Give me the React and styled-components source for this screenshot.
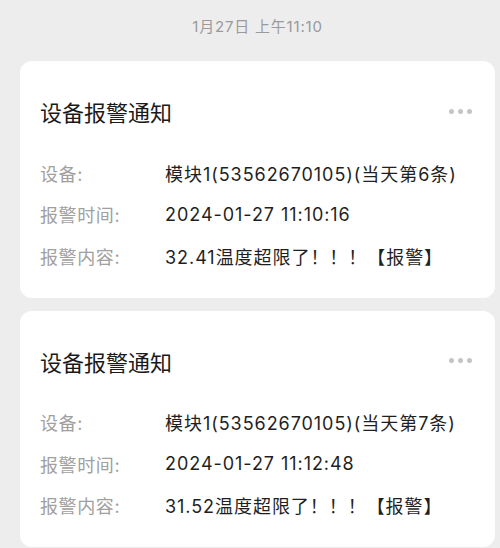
import React from "react";
import styled, { createGlobalStyle } from "styled-components";

const GlobalStyle = createGlobalStyle`
  html, body {
    margin: 0;
    padding: 0;
    background: #ededed;
    font-family: Inter, "Noto Sans CJK SC", "Noto Sans", sans-serif;
  }
`;

const alarmData = [
  {
    device: "模块1(53562670105)(当天第6条)",
    time: "2024-01-27 11:10:16",
    content: "32.41温度超限了！！！【报警】",
  },
  {
    device: "模块1(53562670105)(当天第7条)",
    time: "2024-01-27 11:12:48",
    content: "31.52温度超限了！！！【报警】",
  },
];

const Page = styled.div`
  width: 500px;
  height: 548px;
  overflow: hidden;
  padding: 0 5px 0 20px;
  box-sizing: border-box;
`;

const DateLabel = styled.div`
  height: 61px;
  display: flex;
  justify-content: center;
  align-items: flex-start;
  padding-top: 17px;
  box-sizing: border-box;
  font-size: 15px;
  line-height: 20px;
  letter-spacing: 0.8px;
  color: #9a9a9a;
`;

const CardList = styled.div`
  display: flex;
  flex-direction: column;
  gap: 13px;
`;

const Card = styled.div`
  background: #ffffff;
  border-radius: 12px;
  padding: 35px 20px 21px 20px;
`;

const CardHead = styled.div`
  display: flex;
  align-items: center;
  justify-content: space-between;
  height: 30px;
  margin-bottom: 26px;
`;

const CardTitle = styled.div`
  font-size: 22px;
  color: #1a1a1a;
`;

const MoreDots = styled.div`
  display: flex;
  gap: 4px;
  padding-right: 3px;

  span {
    width: 5px;
    height: 5px;
    border-radius: 50%;
    background: #c4c4c4;
  }
`;

const InfoRow = styled.div`
  display: flex;
  align-items: center;
  height: 41.5px;
  font-size: 18px;
`;

const InfoLabel = styled.div`
  width: 125px;
  flex-shrink: 0;
  color: #a0a0a0;
  letter-spacing: 0.6px;
`;

const InfoValue = styled.div`
  color: #1f1f1f;
  white-space: nowrap;
  letter-spacing: 0.95px;
`;

const App = () => {
  return (
    <>
      <GlobalStyle />
      <Page>
        <DateLabel>1月27日 上午11:10</DateLabel>
        <CardList>
          {alarmData.map((item, index) => (
            <Card key={index}>
              <CardHead>
                <CardTitle>设备报警通知</CardTitle>
                <MoreDots>
                  <span />
                  <span />
                  <span />
                </MoreDots>
              </CardHead>
              <InfoRow>
                <InfoLabel>设备:</InfoLabel>
                <InfoValue>{item.device}</InfoValue>
              </InfoRow>
              <InfoRow>
                <InfoLabel>报警时间:</InfoLabel>
                <InfoValue>{item.time}</InfoValue>
              </InfoRow>
              <InfoRow>
                <InfoLabel>报警内容:</InfoLabel>
                <InfoValue>{item.content}</InfoValue>
              </InfoRow>
            </Card>
          ))}
        </CardList>
      </Page>
    </>
  );
};

export default App;
